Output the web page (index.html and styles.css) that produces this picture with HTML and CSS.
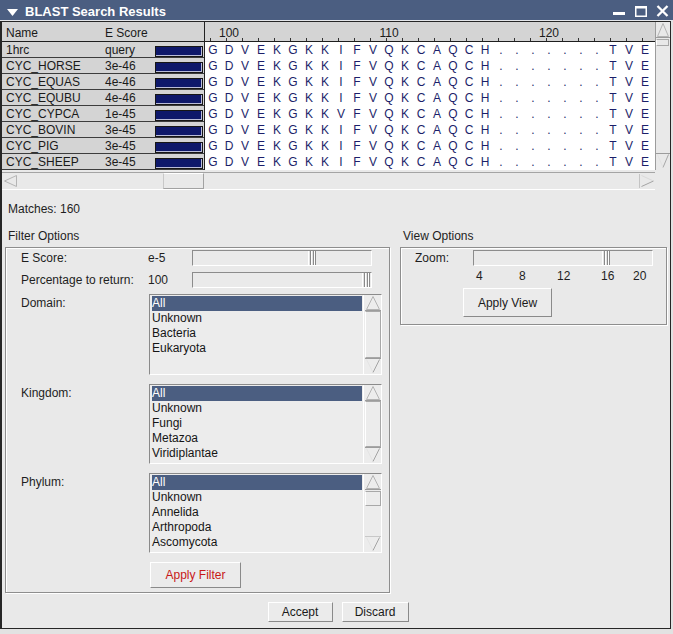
FILE: index.html
```html
<!DOCTYPE html>
<html>
<head>
<meta charset="utf-8">
<title>BLAST Search Results</title>
<link rel="stylesheet" href="styles.css">
</head>
<body>
<div class="window">
  <div class="titlebar">
    <svg class="menu-tri" width="11" height="7" viewBox="0 0 11 7"><polygon points="0,0 11,0 5.5,7" fill="#fff"/></svg>
    <span class="title">BLAST Search Results</span>
    <div class="wm">
      <svg width="13" height="12" viewBox="0 0 13 12"><rect x="1" y="7" width="12" height="3" fill="#fff"/></svg>
      <svg width="13" height="12" viewBox="0 0 13 12"><rect x="1.75" y="1.75" width="10.5" height="9.5" fill="none" stroke="#fff" stroke-width="1.5"/><rect x="1" y="1" width="12" height="2.5" fill="#fff"/></svg>
      <svg width="13" height="12" viewBox="0 0 13 12"><path d="M1.5 1 L11.5 11 M11.5 1 L1.5 11" stroke="#fff" stroke-width="2.3"/></svg>
    </div>
  </div>

  <div class="client">
    <div class="results">
      <div class="table">
        <div class="names">
          <div class="nrow nhead"><span class="ncol">Name</span><span class="scol">E Score</span></div>
          <div class="nrow"><span class="ncol">1hrc</span><span class="scol">query</span><span class="bar"></span></div>
          <div class="nrow"><span class="ncol">CYC_HORSE</span><span class="scol">3e-46</span><span class="bar"></span></div>
          <div class="nrow"><span class="ncol">CYC_EQUAS</span><span class="scol">4e-46</span><span class="bar"></span></div>
          <div class="nrow"><span class="ncol">CYC_EQUBU</span><span class="scol">4e-46</span><span class="bar"></span></div>
          <div class="nrow"><span class="ncol">CYC_CYPCA</span><span class="scol">1e-45</span><span class="bar"></span></div>
          <div class="nrow"><span class="ncol">CYC_BOVIN</span><span class="scol">3e-45</span><span class="bar"></span></div>
          <div class="nrow"><span class="ncol">CYC_PIG</span><span class="scol">3e-45</span><span class="bar"></span></div>
          <div class="nrow"><span class="ncol">CYC_SHEEP</span><span class="scol">3e-45</span><span class="bar"></span></div>
        </div>
        <div class="seq">
          <div class="ruler">
            <div class="rlabels"><span class="rl c2">100</span><span class="rl c12">110</span><span class="rl c22">120</span></div>
            <div class="ticks"></div>
          </div>
          <div class="srow"><span>G</span><span>D</span><span>V</span><span>E</span><span>K</span><span>G</span><span>K</span><span>K</span><span>I</span><span>F</span><span>V</span><span>Q</span><span>K</span><span>C</span><span>A</span><span>Q</span><span>C</span><span>H</span><span>.</span><span>.</span><span>.</span><span>.</span><span>.</span><span>.</span><span>.</span><span>T</span><span>V</span><span>E</span></div>
          <div class="srow"><span>G</span><span>D</span><span>V</span><span>E</span><span>K</span><span>G</span><span>K</span><span>K</span><span>I</span><span>F</span><span>V</span><span>Q</span><span>K</span><span>C</span><span>A</span><span>Q</span><span>C</span><span>H</span><span>.</span><span>.</span><span>.</span><span>.</span><span>.</span><span>.</span><span>.</span><span>T</span><span>V</span><span>E</span></div>
          <div class="srow"><span>G</span><span>D</span><span>V</span><span>E</span><span>K</span><span>G</span><span>K</span><span>K</span><span>I</span><span>F</span><span>V</span><span>Q</span><span>K</span><span>C</span><span>A</span><span>Q</span><span>C</span><span>H</span><span>.</span><span>.</span><span>.</span><span>.</span><span>.</span><span>.</span><span>.</span><span>T</span><span>V</span><span>E</span></div>
          <div class="srow"><span>G</span><span>D</span><span>V</span><span>E</span><span>K</span><span>G</span><span>K</span><span>K</span><span>I</span><span>F</span><span>V</span><span>Q</span><span>K</span><span>C</span><span>A</span><span>Q</span><span>C</span><span>H</span><span>.</span><span>.</span><span>.</span><span>.</span><span>.</span><span>.</span><span>.</span><span>T</span><span>V</span><span>E</span></div>
          <div class="srow"><span>G</span><span>D</span><span>V</span><span>E</span><span>K</span><span>G</span><span>K</span><span>K</span><span>V</span><span>F</span><span>V</span><span>Q</span><span>K</span><span>C</span><span>A</span><span>Q</span><span>C</span><span>H</span><span>.</span><span>.</span><span>.</span><span>.</span><span>.</span><span>.</span><span>.</span><span>T</span><span>V</span><span>E</span></div>
          <div class="srow"><span>G</span><span>D</span><span>V</span><span>E</span><span>K</span><span>G</span><span>K</span><span>K</span><span>I</span><span>F</span><span>V</span><span>Q</span><span>K</span><span>C</span><span>A</span><span>Q</span><span>C</span><span>H</span><span>.</span><span>.</span><span>.</span><span>.</span><span>.</span><span>.</span><span>.</span><span>T</span><span>V</span><span>E</span></div>
          <div class="srow"><span>G</span><span>D</span><span>V</span><span>E</span><span>K</span><span>G</span><span>K</span><span>K</span><span>I</span><span>F</span><span>V</span><span>Q</span><span>K</span><span>C</span><span>A</span><span>Q</span><span>C</span><span>H</span><span>.</span><span>.</span><span>.</span><span>.</span><span>.</span><span>.</span><span>.</span><span>T</span><span>V</span><span>E</span></div>
          <div class="srow"><span>G</span><span>D</span><span>V</span><span>E</span><span>K</span><span>G</span><span>K</span><span>K</span><span>I</span><span>F</span><span>V</span><span>Q</span><span>K</span><span>C</span><span>A</span><span>Q</span><span>C</span><span>H</span><span>.</span><span>.</span><span>.</span><span>.</span><span>.</span><span>.</span><span>.</span><span>T</span><span>V</span><span>E</span></div>
        </div>
      </div>
      <div class="vscroll">
        <svg class="arrow" width="14" height="16" viewBox="0 0 14 16"><polygon points="1.5,14.5 7,1.5 12.5,14.5" fill="none" stroke="#b4b4b4"/><line x1="0" y1="15.5" x2="14" y2="15.5" stroke="#9c9c9c"/></svg>
        <div class="vthumb"></div>
        <svg class="arrow down" width="14" height="16" viewBox="0 0 14 16"><line x1="0" y1="0.5" x2="14" y2="0.5" stroke="#9c9c9c"/><polyline points="12.5,1.5 7,14.5" fill="none" stroke="#a8a8a8"/><polyline points="1.5,1.5 7,14.5" fill="none" stroke="#e2e2e2"/></svg>
      </div>
      <div class="hscroll">
        <div class="htrack">
          <svg class="harrow" width="14" height="14" viewBox="0 0 14 14"><polygon points="1.5,7 13.5,1.5 13.5,12.5" fill="none" stroke="#b4b4b4"/></svg>
          <div class="hthumb"></div>
          <svg class="harrow right" width="16" height="14" viewBox="0 0 16 14"><line x1="0.5" y1="0" x2="0.5" y2="14" stroke="#c4c4c4"/><polyline points="2.5,12.5 14.5,7" fill="none" stroke="#a4a4a4"/><polyline points="2.5,1.5 14.5,7" fill="none" stroke="#dadada"/></svg>
        </div>
      </div>
      <div class="corner"></div>
    </div>

    <div class="matches">Matches: 160</div>

    <div class="options">
      <div class="filter-col">
        <div class="glabel">Filter Options</div>
        <div class="group filter-group">
          <div class="frow slider-row">
            <span class="flabel">E Score:</span>
            <span class="fvalue">e-5</span>
            <div class="trough"><div class="thumb t-escore"></div></div>
          </div>
          <div class="frow slider-row gap6">
            <span class="flabel">Percentage to return:</span>
            <span class="fvalue">100</span>
            <div class="trough"><div class="thumb t-pct"></div></div>
          </div>
          <div class="frow list-row gap6">
            <span class="flabel top">Domain:</span>
            <div class="listbox tall">
              <div class="items">
                <div class="item sel">All</div>
                <div class="item">Unknown</div>
                <div class="item">Bacteria</div>
                <div class="item">Eukaryota</div>
              </div>
              <div class="lscroll">
                <svg class="larrow" width="16" height="16" viewBox="0 0 16 16"><polygon points="1.5,14.5 8,1.5 14.5,14.5" fill="none" stroke="#b4b4b4"/><line x1="0" y1="15.5" x2="16" y2="15.5" stroke="#9c9c9c"/></svg>
                <div class="lthumb full"></div>
                <svg class="larrow" width="16" height="16" viewBox="0 0 16 16"><line x1="0" y1="0.5" x2="16" y2="0.5" stroke="#9c9c9c"/><polyline points="14.5,1.5 8,14.5" fill="none" stroke="#a4a4a4"/><polyline points="1.5,1.5 8,14.5" fill="none" stroke="#e4e4e4"/></svg>
              </div>
            </div>
          </div>
          <div class="frow list-row gap9">
            <span class="flabel top">Kingdom:</span>
            <div class="listbox">
              <div class="items">
                <div class="item sel">All</div>
                <div class="item">Unknown</div>
                <div class="item">Fungi</div>
                <div class="item">Metazoa</div>
                <div class="item">Viridiplantae</div>
              </div>
              <div class="lscroll">
                <svg class="larrow" width="16" height="16" viewBox="0 0 16 16"><polygon points="1.5,14.5 8,1.5 14.5,14.5" fill="none" stroke="#b4b4b4"/><line x1="0" y1="15.5" x2="16" y2="15.5" stroke="#9c9c9c"/></svg>
                <div class="lthumb full"></div>
                <svg class="larrow" width="16" height="16" viewBox="0 0 16 16"><line x1="0" y1="0.5" x2="16" y2="0.5" stroke="#9c9c9c"/><polyline points="14.5,1.5 8,14.5" fill="none" stroke="#a4a4a4"/><polyline points="1.5,1.5 8,14.5" fill="none" stroke="#e4e4e4"/></svg>
              </div>
            </div>
          </div>
          <div class="frow list-row gap9">
            <span class="flabel top">Phylum:</span>
            <div class="listbox">
              <div class="items">
                <div class="item sel">All</div>
                <div class="item">Unknown</div>
                <div class="item">Annelida</div>
                <div class="item">Arthropoda</div>
                <div class="item">Ascomycota</div>
              </div>
              <div class="lscroll">
                <svg class="larrow" width="16" height="16" viewBox="0 0 16 16"><polygon points="1.5,14.5 8,1.5 14.5,14.5" fill="none" stroke="#b4b4b4"/><line x1="0" y1="15.5" x2="16" y2="15.5" stroke="#9c9c9c"/></svg>
                <div class="ltrack"><div class="lthumb small"></div></div>
                <svg class="larrow" width="16" height="16" viewBox="0 0 16 16"><line x1="0" y1="0.5" x2="16" y2="0.5" stroke="#c8c8c8"/><polyline points="14.5,1.5 8,14.5" fill="none" stroke="#a4a4a4"/><polyline points="1.5,1.5 8,14.5" fill="none" stroke="#e4e4e4"/></svg>
              </div>
            </div>
          </div>
          <div class="frow gap9">
            <button class="btn apply-filter">Apply Filter</button>
          </div>
        </div>
      </div>

      <div class="view-col">
        <div class="glabel">View Options</div>
        <div class="group view-group">
          <div class="zoom-row">
            <span class="zlabel">Zoom:</span>
            <div class="trough"><div class="thumb t-zoom"></div></div>
          </div>
          <div class="scale"><span>4</span><span>8</span><span>12</span><span>16</span><span>20</span></div>
          <button class="btn apply-view">Apply View</button>
        </div>
      </div>
    </div>

    <div class="actions">
      <button class="btn accept">Accept</button>
      <button class="btn discard">Discard</button>
    </div>
  </div>
</div>
</body>
</html>
```

FILE: styles.css
```css
* { box-sizing: border-box; }

html, body {
  margin: 0;
  padding: 0;
}

body {
  width: 673px;
  height: 634px;
  overflow: hidden;
  font-family: "Liberation Sans", Arial, sans-serif;
  font-size: 12px;
  color: #1e1e1e;
  background: #e2e2e2;
}

.window {
  width: 673px;
  height: 634px;
  display: flex;
  flex-direction: column;
  background: #e2e2e2;
}

/* ---------- title bar ---------- */
.titlebar {
  height: 21px;
  flex: none;
  display: flex;
  align-items: center;
  background: #4b5e81;
  border-bottom: 1px solid #e4e6ea;
  color: #fff;
}

.menu-tri {
  margin: 5px 0 0 7px;
}

.title {
  margin: 3px 0 0 7px;
  font-weight: bold;
  font-size: 13px;
  line-height: 16px;
}

.wm {
  margin-left: auto;
  margin-right: 4px;
  margin-top: 2px;
  display: flex;
  gap: 9px;
}

.wm svg { display: block; }

/* ---------- client area ---------- */
.client {
  flex: 1;
  display: flex;
  flex-direction: column;
  margin: 0 2px 5px 0;
  border-left: 2px solid #262626;
  border-right: 1px solid #262626;
  border-bottom: 1px solid #262626;
  background: #e9e9e9;
}

.results {
  display: grid;
  grid-template-columns: 653px 14px;
  grid-template-rows: 148px 20px;
  border-top: 1px solid #262626;
}

.table {
  display: flex;
}

.names {
  width: 203px;
  background: #d4d4d4;
  border-right: 1px solid #222;
}

.nrow {
  display: flex;
  height: 16px;
  padding-top: 1px;
  line-height: 14px;
  border-bottom: 1px solid #3c3c3c;
  color: #1a1a1a;
}

.nrow.nhead {
  height: 20px;
  padding-top: 4px;
  border-bottom-color: #1e1e1e;
}

.ncol {
  width: 100px;
  padding-left: 4px;
}

.scol {
  width: 50px;
  padding-left: 3px;
}

.bar {
  width: 48px;
  height: 11px;
  margin: 3px 0 0 3px;
  background: #0e186a;
  border: 1px solid #161616;
  box-shadow: inset -1px -1px 0 #b9bcd8;
}

.seq {
  width: 450px;
  background: #fff;
}

.ruler {
  height: 20px;
  background: #d4d4d4;
  border-bottom: 1px solid #1e1e1e;
  display: flex;
  flex-direction: column;
}

.rlabels {
  display: grid;
  grid-template-columns: repeat(28, 16px);
  height: 16px;
}

.rl {
  display: flex;
  justify-content: center;
  padding-top: 4px;
  line-height: 14px;
  color: #1a1a1a;
}

.c2 { grid-column: 2; }
.c12 { grid-column: 12; }
.c22 { grid-column: 22; }

.ticks {
  height: 3px;
  background: repeating-linear-gradient(to right, transparent 0 5px, #333 5px 6px, transparent 6px 16px);
}

.srow {
  display: flex;
  height: 16px;
  padding-top: 1px;
  line-height: 15px;
  color: #1c1f6a;
}

.srow span {
  width: 16px;
  text-align: center;
}

/* ---------- scrollbars ---------- */
.vscroll {
  background: #e9e9e9;
  border-left: 1px solid #9c9c9c;
  display: flex;
  flex-direction: column;
}

.vscroll .arrow { display: block; }
.vscroll .arrow.down { margin-top: auto; margin-bottom: 1px; }

.vthumb {
  height: 7px;
  margin-top: 1px;
  border: 1px solid #a8a8a8;
  border-left-color: #fff;
}

.hscroll {
  padding-top: 2px;
}

.htrack {
  height: 18px;
  border-top: 1px solid #a4a4a4;
  border-bottom: 1px solid #fff;
  display: flex;
  align-items: center;
}

.harrow {
  display: block;
  margin-left: 1px;
}

.harrow.right {
  margin-left: auto;
  margin-right: 0;
}

.hthumb {
  width: 41px;
  height: 16px;
  margin-left: 146px;
  border: 1px solid #a2a2a2;
  border-top-color: #fff;
  border-left-color: #c8c8c8;
}

.corner {
  background: #e9e9e9;
}

/* ---------- matches ---------- */
.matches {
  margin-top: 12px;
  padding-left: 6px;
  line-height: 14px;
}

/* ---------- options ---------- */
.options {
  display: flex;
  align-items: flex-start;
  margin: 13px 0 0 3px;
}

.filter-col { width: 385px; }

.view-col {
  width: 267px;
  margin-left: 10px;
}

.glabel {
  padding-left: 3px;
  line-height: 14px;
}

.group {
  margin-top: 4px;
  border: 1px solid #8e8e8e;
  box-shadow: inset 1px 1px 0 #fff, 1px 1px 0 #fff;
}

.filter-group {
  padding: 2px 0 4px 15px;
}

.frow {
  display: flex;
}

.slider-row {
  height: 16px;
  align-items: center;
}

.gap6 { margin-top: 6px; }
.gap9 { margin-top: 9px; }

.flabel {
  width: 127px;
  line-height: 14px;
}

.flabel.top { padding-top: 2px; }

.fvalue {
  width: 44px;
  line-height: 14px;
}

.trough {
  width: 180px;
  height: 16px;
  display: flex;
  border: 1px solid;
  border-color: #8c8c8c #fff #fff #8c8c8c;
  background: #eaeaea;
}

.thumb {
  width: 8px;
  height: 14px;
  background: linear-gradient(to right, #fff 0 1px, #e2e2e2 1px 2px, #8a8a8a 2px 3px, #fff 3px 4px, #e2e2e2 4px 5px, #8a8a8a 5px 6px, #fff 6px 7px, #8a8a8a 7px 8px);
}

.t-escore { margin-left: 115px; }
.t-pct { margin-left: 169px; }
.t-zoom { margin-left: 128px; }

/* listboxes */
.listbox {
  width: 233px;
  height: 80px;
  margin-left: 1px;
  display: flex;
  border: 1px solid;
  border-color: #8a8a8a #fff #fff #8a8a8a;
  background: #ececec;
}

.listbox.tall { height: 81px; }

.items {
  flex: 1;
  padding: 1px 1px 0 2px;
  border-right: 1px solid #fff;
  overflow: hidden;
}

.item {
  line-height: 15px;
  color: #151515;
}

.item.sel {
  background: #4b5e81;
  color: #fff;
}

.lscroll {
  width: 17px;
  display: flex;
  flex-direction: column;
  padding-left: 1px;
}

.larrow { display: block; flex: none; }

.lthumb {
  border: 1px solid #a8a8a8;
  border-left-color: #fff;
}

.lthumb.full { flex: 1; }

.ltrack { flex: 1; padding-top: 1px; }

.lthumb.small { height: 15px; }

/* buttons */
.btn {
  font-family: "Liberation Sans", Arial, sans-serif;
  font-size: 12px;
  color: #1a1a1a;
  background: #ebebeb;
  border: 1px solid;
  border-color: #fff #8a8a8a #8a8a8a #fff;
  padding: 0;
  margin: 0;
  line-height: 14px;
}

.apply-filter {
  width: 91px;
  height: 26px;
  margin-left: 129px;
  color: #c81818;
}

.view-group {
  padding: 2px 0 7px 14px;
}

.zoom-row {
  display: flex;
  align-items: center;
  height: 16px;
}

.zlabel {
  width: 58px;
  line-height: 14px;
}

.scale {
  display: grid;
  grid-template-columns: 43px 38px 44px 32px auto;
  margin: 4px 0 0 61px;
  line-height: 13px;
}

.apply-view {
  display: block;
  width: 89px;
  height: 29px;
  margin: 5px 0 0 48px;
}

.actions {
  display: flex;
  justify-content: center;
  gap: 9px;
  margin-top: 9px;
  padding-left: 4px;
}

.accept {
  width: 65px;
  height: 20px;
}

.discard {
  width: 67px;
  height: 20px;
}
```
